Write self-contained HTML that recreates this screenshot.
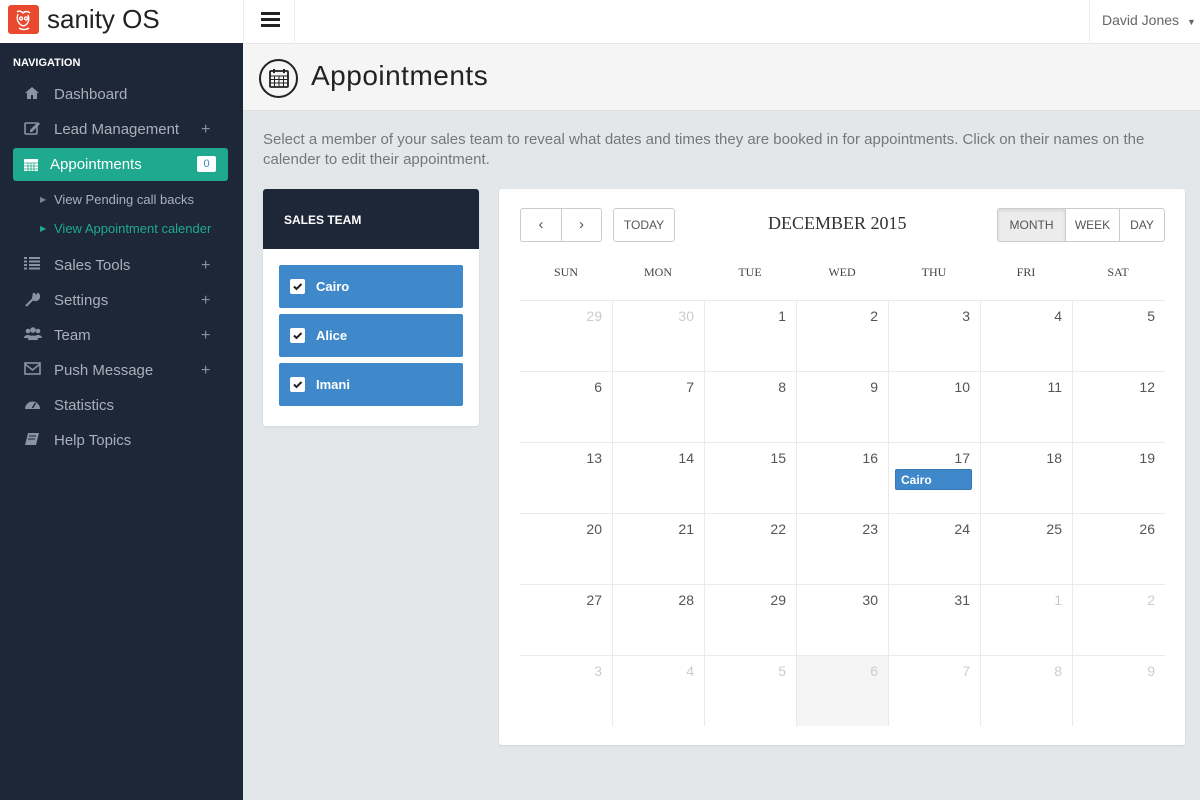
<!DOCTYPE html>
<html><head><meta charset="utf-8"><style>
*{box-sizing:border-box;margin:0;padding:0}
body{width:1200px;height:800px;overflow:hidden;background:#e3e7ea;font-family:"Liberation Sans",sans-serif;position:relative}
.abs{position:absolute}
#top{left:0;top:0;width:1200px;height:44px;background:#fff;border-bottom:1px solid #e5e5e5}
#side{left:0;top:43px;width:243px;height:757px;background:#1d2738}
.nav{position:absolute;left:24px;color:#a9b0ba;font-size:15px}
.nav .t{position:absolute;left:30px;top:0;white-space:nowrap}
.plus{position:absolute;left:201px;color:#8a93a0;font-size:16px}
.sub{position:absolute;left:40px;font-size:13px;color:#a9b0ba;white-space:nowrap}
#ptitle{left:243px;top:44px;width:957px;height:67px;background:#f5f5f5;border-bottom:1px solid #dde0e3}
.card{background:#fff;border-radius:3px;box-shadow:0 1px 2px rgba(0,0,0,.08)}
.member{position:absolute;left:16px;width:184px;height:43px;background:#3f88c9;border-radius:2px;color:#fff;font-size:13px;font-weight:bold}
.member .cb{position:absolute;left:11px;top:14px;width:15px;height:15px;background:#fff;border-radius:2px}
.member span{position:absolute;left:37px;top:14px}
.btn{position:absolute;border:1px solid #ccc;background:#fff;color:#555;font-size:12px;text-align:center;line-height:32px;height:34px;border-radius:3px}
.dh{position:absolute;top:265px;width:92px;text-align:center;font-family:"Liberation Serif",serif;font-size:12px;color:#444}
.cell{position:absolute;width:92px;height:71px;border-left:1px solid #eaeaea;border-top:1px solid #eaeaea;font-size:14px;color:#555;text-align:right;padding:7px 10px 0 0}
.cell.f{color:#ccc}
</style></head><body>
<div id="top" class="abs">
  <div class="abs" style="left:8px;top:5px;width:31px;height:29px;background:#e8492f;border-radius:3px">
    <svg width="31" height="29" viewBox="0 0 31 29"><path d="M9 7c2-2 4-1 6 1 2-2 5-2 7 0M10 9c-2 5 0 10 5 12 5-1 7-6 5-11M13 12a1.5 1.5 0 1 0 .1 0M18 12a1.5 1.5 0 1 0 .1 0M11 23c3 2 7 2 10 0" stroke="#fff" stroke-width="1.4" fill="none"/></svg>
  </div>
  <div class="abs" style="left:47px;top:4px;font-size:26px;color:#222">sanity OS</div>
  <div class="abs" style="left:243px;top:0;width:52px;height:44px;border-left:1px solid #eee;border-right:1px solid #eee">
    <div class="abs" style="left:17px;top:12px;width:19px;height:3px;background:#222"></div>
    <div class="abs" style="left:17px;top:18px;width:19px;height:3px;background:#222"></div>
    <div class="abs" style="left:17px;top:24px;width:19px;height:3px;background:#222"></div>
  </div>
  <div class="abs" style="left:1089px;top:0;width:111px;height:44px;border-left:1px solid #eee;font-size:14px;color:#666;padding:12px 0 0 12px">David Jones <span style="font-size:9px;margin-left:4px">▼</span></div>
</div>
<div id="side" class="abs">
  <div class="abs" style="left:13px;top:14px;color:#fff;font-size:11px;font-weight:bold">NAVIGATION</div>
  <div class="nav" style="top:43px"><svg width="16" height="14" viewBox="0 0 16 14"><path d="M8 1L1 7h2v6h4V9h2v4h4V7h2z" fill="#8a93a0"/></svg><span class="t">Dashboard</span></div>
  <div class="nav" style="top:78px"><svg width="17" height="14" viewBox="0 0 17 14"><rect x="1" y="2" width="12" height="11" rx="1" stroke="#8a93a0" stroke-width="1.6" fill="none"/><path d="M6 9l8-8 2 2-8 8H6z" fill="#8a93a0"/></svg><span class="t">Lead Management</span></div>
  <div class="plus" style="top:78px">+</div>
  <div class="abs" style="left:13px;top:105px;width:215px;height:33px;background:#1fa98e;border-radius:3px">
    <svg class="abs" style="left:10px;top:9px" width="16" height="15" viewBox="0 0 16 15"><rect x="1" y="2" width="14" height="12" fill="#fff"/><path d="M1 6h14M5 6v8M8 6v8M11 6v8M1 9h14M1 12h14" stroke="#1fa98e" stroke-width=".8"/></svg>
    <div class="abs" style="left:37px;top:8px;color:#fff;font-size:15px">Appointments</div>
    <div class="abs" style="left:184px;top:8px;width:19px;height:16px;background:#fff;border-radius:2px;color:#3f88c9;font-size:11px;text-align:center;line-height:16px">0</div>
  </div>
  <div class="abs" style="left:40px;top:152px;color:#7a8390;font-size:8px">▶</div>
  <div class="sub" style="left:54px;top:149px">View Pending call backs</div>
  <div class="abs" style="left:40px;top:181px;color:#1fa98e;font-size:8px">▶</div>
  <div class="sub" style="left:54px;top:178px;color:#1fa98e">View Appointment calender</div>
  <div class="nav" style="top:214px"><svg width="16" height="13" viewBox="0 0 16 13"><path d="M0 1h3M5 1h11M0 4.5h3M5 4.5h11M0 8h3M5 8h11M0 11.5h3M5 11.5h11" stroke="#8a93a0" stroke-width="2"/></svg><span class="t">Sales Tools</span></div>
  <div class="plus" style="top:214px">+</div>
  <div class="nav" style="top:249px"><svg width="16" height="15" viewBox="0 0 16 15"><path d="M2 14l7-7M9 7a3.5 3.5 0 1 0 5-5l-2 2-2-1 0-2z" stroke="#8a93a0" stroke-width="2.2" fill="#8a93a0"/></svg><span class="t">Settings</span></div>
  <div class="plus" style="top:249px">+</div>
  <div class="nav" style="top:284px"><svg width="18" height="14" viewBox="0 0 18 14"><circle cx="4" cy="4" r="2.3" fill="#8a93a0"/><circle cx="14" cy="4" r="2.3" fill="#8a93a0"/><circle cx="9" cy="3" r="2.8" fill="#8a93a0"/><path d="M0 11c0-4 8-4 8 0zM10 11c0-4 8-4 8 0zM4 13c0-6 10-6 10 0z" fill="#8a93a0"/></svg><span class="t">Team</span></div>
  <div class="plus" style="top:284px">+</div>
  <div class="nav" style="top:319px"><svg width="17" height="13" viewBox="0 0 17 13"><rect x="1" y="1" width="15" height="11" stroke="#8a93a0" stroke-width="1.6" fill="none"/><path d="M1 2l7.5 6L16 2" stroke="#8a93a0" stroke-width="1.6" fill="none"/></svg><span class="t">Push Message</span></div>
  <div class="plus" style="top:319px">+</div>
  <div class="nav" style="top:354px"><svg width="17" height="13" viewBox="0 0 17 13"><path d="M1 12a7.5 7.5 0 0 1 15 0z" fill="#8a93a0"/><path d="M8.5 11l3-5" stroke="#1d2738" stroke-width="1.5"/></svg><span class="t">Statistics</span></div>
  <div class="nav" style="top:389px"><svg width="16" height="14" viewBox="0 0 16 14"><path d="M4 1h11l-3 12H1z" fill="#8a93a0"/><path d="M5 4h7M4 7h7" stroke="#1d2738" stroke-width="1"/></svg><span class="t">Help Topics</span></div>
</div>
<div id="ptitle" class="abs">
  <div class="abs" style="left:16px;top:15px;width:39px;height:39px;border:2px solid #222;border-radius:50%">
    <svg class="abs" style="left:8px;top:7px" width="20" height="20" viewBox="0 0 20 20"><rect x="1" y="3" width="18" height="16" rx="1" stroke="#222" stroke-width="1.8" fill="none"/><path d="M1 8h18M5.5 8v11M10 8v11M14.5 8v11M1 11.5h18M1 15h18" stroke="#222" stroke-width="1"/><path d="M5 1v4M15 1v4" stroke="#222" stroke-width="2"/></svg>
  </div>
  <div class="abs" style="left:68px;top:16px;font-size:28px;letter-spacing:0.5px;color:#222">Appointments</div>
</div>
<div class="abs" style="left:263px;top:130px;width:900px;font-size:15px;line-height:20px;color:#777">Select a member of your sales team to reveal what dates and times they are booked in for appointments. Click on their names on the calender to edit their appointment.</div>

<div class="abs card" style="left:263px;top:189px;width:216px;height:237px">
  <div class="abs" style="left:0;top:0;width:216px;height:60px;background:#1d2738;border-radius:3px 3px 0 0;color:#fff;font-size:12px;font-weight:bold;padding:24px 0 0 21px">SALES TEAM</div>
  <div class="member" style="top:76px"><div class="cb"><svg width="15" height="15" viewBox="0 0 15 15"><path d="M4 7.5l2.5 2.5 5-5" stroke="#222" stroke-width="2" fill="none"/></svg></div><span>Cairo</span></div>
  <div class="member" style="top:125px"><div class="cb"><svg width="15" height="15" viewBox="0 0 15 15"><path d="M4 7.5l2.5 2.5 5-5" stroke="#222" stroke-width="2" fill="none"/></svg></div><span>Alice</span></div>
  <div class="member" style="top:174px"><div class="cb"><svg width="15" height="15" viewBox="0 0 15 15"><path d="M4 7.5l2.5 2.5 5-5" stroke="#222" stroke-width="2" fill="none"/></svg></div><span>Imani</span></div>
</div>

<div class="abs card" style="left:499px;top:189px;width:686px;height:556px"></div>
<div class="btn" style="left:520px;top:208px;width:42px;border-radius:3px 0 0 3px;font-size:15px">‹</div>
<div class="btn" style="left:561px;top:208px;width:41px;border-radius:0 3px 3px 0;font-size:15px">›</div>
<div class="btn" style="left:613px;top:208px;width:62px">TODAY</div>
<div class="abs" style="left:768px;top:213px;font-family:'Liberation Serif',serif;font-size:18px;color:#333">DECEMBER 2015</div>
<div class="btn" style="left:997px;top:208px;width:69px;background:#ececec;border-radius:3px 0 0 3px;box-shadow:inset 0 2px 3px rgba(0,0,0,.08)">MONTH</div>
<div class="btn" style="left:1065px;top:208px;width:55px;border-radius:0">WEEK</div>
<div class="btn" style="left:1119px;top:208px;width:46px;border-radius:0 3px 3px 0">DAY</div>

<div class="dh" style="left:520px">SUN</div><div class="dh" style="left:612px">MON</div><div class="dh" style="left:704px">TUE</div><div class="dh" style="left:796px">WED</div><div class="dh" style="left:888px">THU</div><div class="dh" style="left:980px">FRI</div><div class="dh" style="left:1072px">SAT</div>

<div class="abs" style="left:520px;top:300px;width:645px;height:426px">
<div class="cell f" style="left:0;top:0;border-left:0">29</div><div class="cell f" style="left:92px;top:0">30</div><div class="cell" style="left:184px;top:0">1</div><div class="cell" style="left:276px;top:0">2</div><div class="cell" style="left:368px;top:0">3</div><div class="cell" style="left:460px;top:0">4</div><div class="cell" style="left:552px;top:0;width:93px">5</div>
<div class="cell" style="left:0;top:71px;border-left:0">6</div><div class="cell" style="left:92px;top:71px">7</div><div class="cell" style="left:184px;top:71px">8</div><div class="cell" style="left:276px;top:71px">9</div><div class="cell" style="left:368px;top:71px">10</div><div class="cell" style="left:460px;top:71px">11</div><div class="cell" style="left:552px;top:71px;width:93px">12</div>
<div class="cell" style="left:0;top:142px;border-left:0">13</div><div class="cell" style="left:92px;top:142px">14</div><div class="cell" style="left:184px;top:142px">15</div><div class="cell" style="left:276px;top:142px">16</div><div class="cell" style="left:368px;top:142px">17</div><div class="cell" style="left:460px;top:142px">18</div><div class="cell" style="left:552px;top:142px;width:93px">19</div>
<div class="cell" style="left:0;top:213px;border-left:0">20</div><div class="cell" style="left:92px;top:213px">21</div><div class="cell" style="left:184px;top:213px">22</div><div class="cell" style="left:276px;top:213px">23</div><div class="cell" style="left:368px;top:213px">24</div><div class="cell" style="left:460px;top:213px">25</div><div class="cell" style="left:552px;top:213px;width:93px">26</div>
<div class="cell" style="left:0;top:284px;border-left:0">27</div><div class="cell" style="left:92px;top:284px">28</div><div class="cell" style="left:184px;top:284px">29</div><div class="cell" style="left:276px;top:284px">30</div><div class="cell" style="left:368px;top:284px">31</div><div class="cell f" style="left:460px;top:284px">1</div><div class="cell f" style="left:552px;top:284px;width:93px">2</div>
<div class="cell f" style="left:0;top:355px;border-left:0">3</div><div class="cell f" style="left:92px;top:355px">4</div><div class="cell f" style="left:184px;top:355px">5</div><div class="cell f" style="left:276px;top:355px;background:#f5f5f5">6</div><div class="cell f" style="left:368px;top:355px">7</div><div class="cell f" style="left:460px;top:355px">8</div><div class="cell f" style="left:552px;top:355px;width:93px">9</div>
<div class="abs" style="left:375px;top:169px;width:77px;height:21px;background:#3f88c9;border:1px solid #3578b5;border-radius:2px;color:#fff;font-size:12px;font-weight:bold;padding:3px 0 0 5px">Cairo</div>
</div>
</body></html>
